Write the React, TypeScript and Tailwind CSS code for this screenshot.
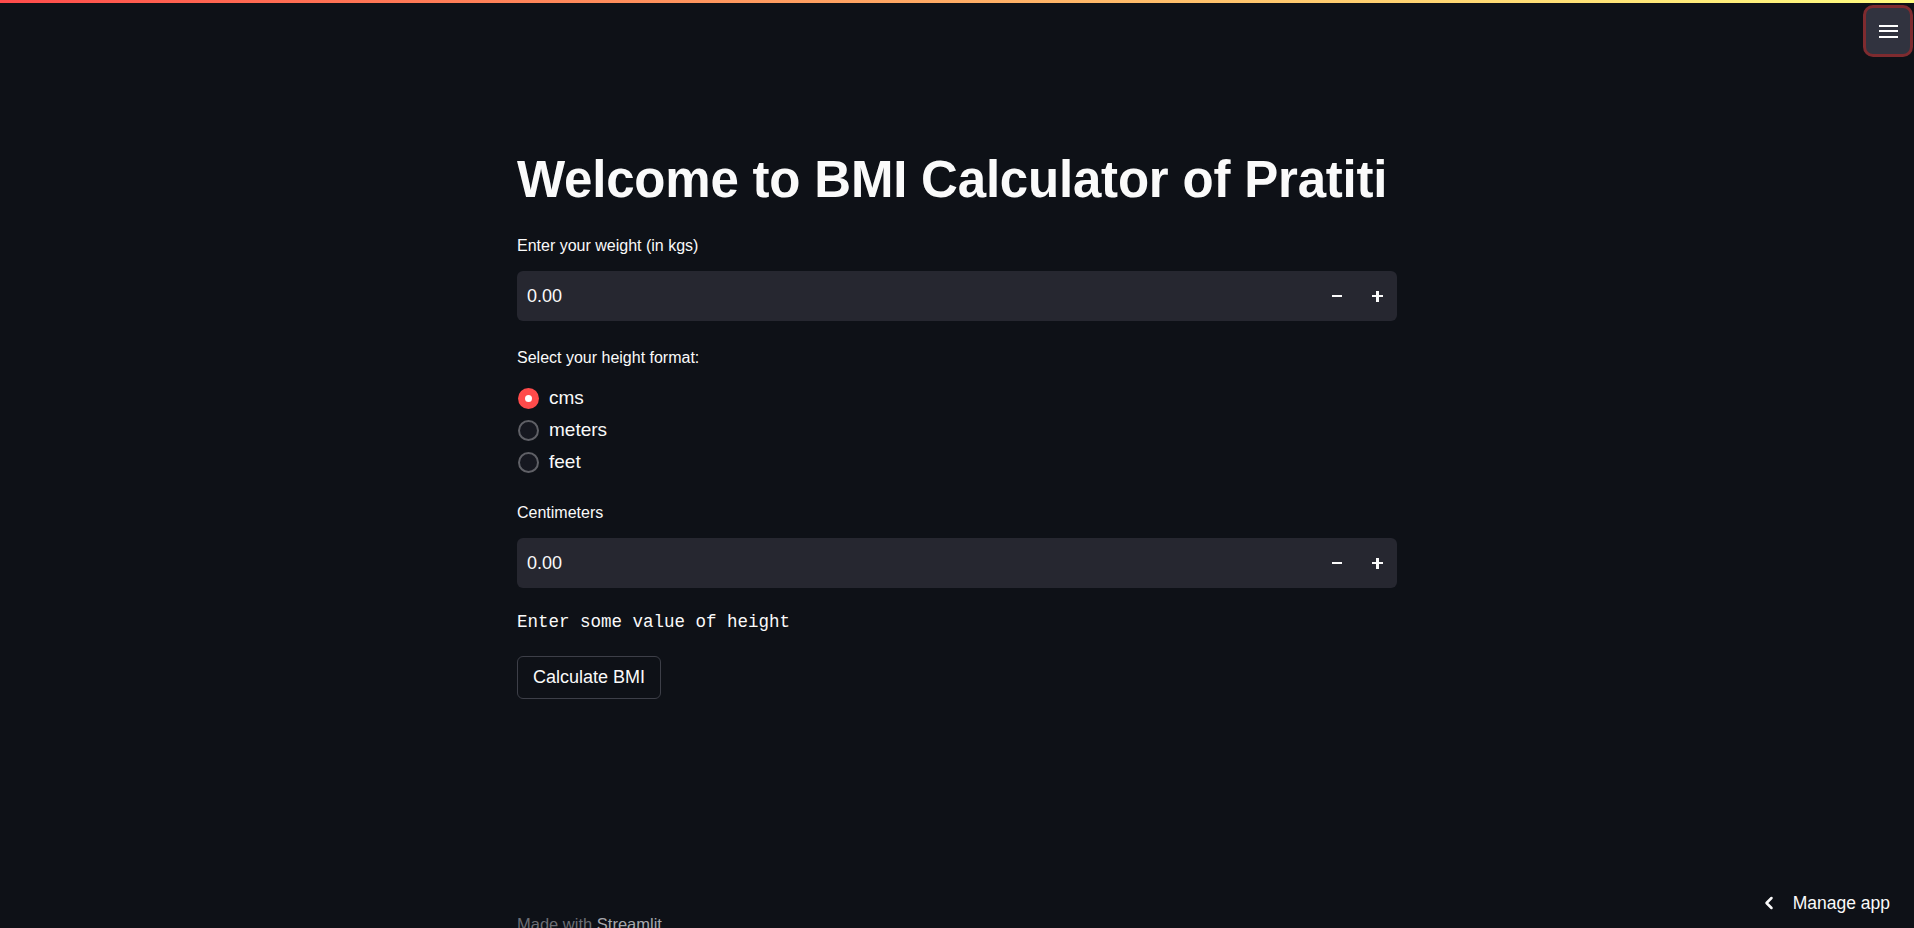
import { ChevronLeft } from 'lucide-react';

const font = { fontFamily: '"Liberation Sans", Arial, sans-serif' };

const NumberInput = ({ value }: { value: string }) => (
  <div className="flex h-[50px] items-center justify-between rounded-[6px] bg-[#262730] pl-[10px] pr-[14px]">
    <span className="text-[18px] text-[#fafafa]">{value}</span>
    <div className="flex items-center gap-[30px]">
      <span className="block h-[2.5px] w-[10px] bg-[#fafafa]" />
      <span className="relative block h-[11px] w-[11px]">
        <span className="absolute left-0 top-[4px] block h-[2.5px] w-[11px] bg-[#fafafa]" />
        <span className="absolute left-[4px] top-0 block h-[11px] w-[2.5px] bg-[#fafafa]" />
      </span>
    </div>
  </div>
);

const Radio = ({ label, checked }: { label: string; checked?: boolean }) => (
  <div className="flex h-[32px] items-center gap-[10px] pl-[1px]">
    {checked ? (
      <span className="flex h-[21px] w-[21px] items-center justify-center rounded-full bg-[#ff4b4b]">
        <span className="block h-[7px] w-[7px] rounded-full bg-white" />
      </span>
    ) : (
      <span className="block h-[21px] w-[21px] rounded-full border-2 border-[#5f6066] bg-[#161820]" />
    )}
    <span className="text-[19px] text-[#fafafa]">{label}</span>
  </div>
);

export default function App() {
  return (
    <div className="relative h-[928px] w-full overflow-hidden bg-[#0e1117] text-[#fafafa]" style={font}>
      <div className="h-[3px] w-full bg-gradient-to-r from-[#ff4b4b] to-[#fffd80]" />

      {/* menu button */}
      <button className="absolute right-[1px] top-[5px] flex h-[52px] w-[50px] items-center justify-center rounded-[10px] border-[3px] border-[#7e2b2f] bg-[#31333f]">
        <span className="flex flex-col gap-[3.5px]">
          <span className="block h-[2px] w-[19px] bg-white" />
          <span className="block h-[2px] w-[19px] bg-white" />
          <span className="block h-[2px] w-[19px] bg-white" />
        </span>
      </button>

      <main className="mx-auto flex w-[880px] flex-col pt-[147px]">
        <h1 className="text-[51px] font-bold leading-[60px] tracking-[-0.2px]">Welcome to BMI Calculator of Pratiti</h1>

        <p className="mt-[26px] text-[16px] leading-[20px]">Enter your weight (in kgs)</p>
        <div className="mt-[15px]">
          <NumberInput value="0.00" />
        </div>

        <p className="mt-[27px] text-[16px] leading-[20px]">Select your height format:</p>
        <div className="mt-[14px] flex flex-col">
          <Radio label="cms" checked />
          <Radio label="meters" />
          <Radio label="feet" />
        </div>

        <p className="mt-[25px] text-[16px] leading-[20px]">Centimeters</p>
        <div className="mt-[15px]">
          <NumberInput value="0.00" />
        </div>

        <p className="mt-[23px] text-[17.5px] leading-[22px]" style={{ fontFamily: '"Liberation Mono", monospace' }}>
          Enter some value of height
        </p>

        <div className="mt-[23px]">
          <button className="h-[43px] w-[144px] rounded-[6px] border border-[#3d3f48] bg-[#0e1117] text-[18px] text-[#fafafa]">
            Calculate BMI
          </button>
        </div>

        <p className="mt-[215px] text-[16.5px] leading-[20px] text-[#6c6e74]">
          Made with <span className="text-[#a6a8ad]">Streamlit</span>
        </p>
      </main>

      {/* manage app */}
      <div className="absolute bottom-[12px] right-[24px] flex items-center gap-[14px] text-[17.5px] text-[#fafafa]">
        <ChevronLeft size={20} strokeWidth={3} />
        <span>Manage app</span>
      </div>
    </div>
  );
}
